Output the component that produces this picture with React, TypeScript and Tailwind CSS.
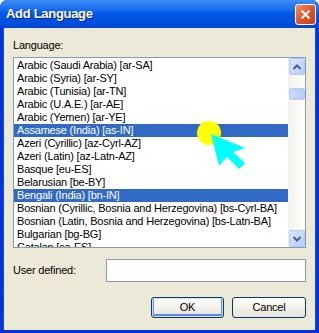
import React from "react";

const langs = [
  "Arabic (Saudi Arabia) [ar-SA]",
  "Arabic (Syria) [ar-SY]",
  "Arabic (Tunisia) [ar-TN]",
  "Arabic (U.A.E.) [ar-AE]",
  "Arabic (Yemen) [ar-YE]",
  "Assamese (India) [as-IN]",
  "Azeri (Cyrillic) [az-Cyrl-AZ]",
  "Azeri (Latin) [az-Latn-AZ]",
  "Basque [eu-ES]",
  "Belarusian [be-BY]",
  "Bengali (India) [bn-IN]",
  "Bosnian (Cyrillic, Bosnia and Herzegovina) [bs-Cyrl-BA]",
  "Bosnian (Latin, Bosnia and Herzegovina) [bs-Latn-BA]",
  "Bulgarian [bg-BG]",
  "Catalan [ca-ES]",
];

const selected = [5, 10];

function ScrollButton({ up }: { up?: boolean }) {
  return (
    <div className="flex h-[17px] w-[16px] items-center justify-center rounded-[2px] border border-[#b7c9f5] bg-gradient-to-br from-[#dbe6fd] to-[#b7cbf9]">
      <svg width="8" height="6" viewBox="0 0 8 6">
        <path
          d={up ? "M0.5 5 L4 1.5 L7.5 5" : "M0.5 1 L4 4.5 L7.5 1"}
          fill="none"
          stroke="#4d6185"
          strokeWidth="2"
        />
      </svg>
    </div>
  );
}

export default function App() {
  return (
    <div
      className="relative h-[333px] w-[319px] overflow-hidden rounded-t-[7px] bg-[#0831d9] text-[11px] tracking-[-0.2px] text-black"
      style={{ fontFamily: '"Liberation Sans", Arial, sans-serif' }}
    >
      <div className="flex h-full flex-col">
        {/* title bar */}
        <div className="flex h-[28px] shrink-0 items-center justify-between rounded-t-[7px] bg-gradient-to-b from-[#3d8ff8] via-[#0058e6] to-[#0047d6] pl-[6px] pr-[3px]">
          <span className="text-[13px] font-bold tracking-[-0.3px] text-white [text-shadow:1px_1px_0_#0a1e88]">
            Add Language
          </span>
          <div className="flex h-[21px] w-[21px] items-center justify-center rounded-[3px] border border-white bg-gradient-to-br from-[#f08b6a] via-[#e2542a] to-[#c6401a]">
            <svg width="11" height="11" viewBox="0 0 11 11">
              <path d="M1.5 1.5 L9.5 9.5 M9.5 1.5 L1.5 9.5" stroke="white" strokeWidth="2" />
            </svg>
          </div>
        </div>

        {/* body */}
        <div className="mx-[3px] mb-[3px] flex flex-1 flex-col border-x border-[#0054e3] bg-[#ece9d8] px-[9px]">
          <div className="mt-[11px] h-[13px] leading-[13px]">Language:</div>

          <div className="mt-[5px] flex h-[191px] border border-[#7f9db9] bg-white">
            <div className="flex-1 overflow-hidden pt-px">
              {langs.map((l, i) => (
                <div
                  key={l}
                  className={
                    "h-[13px] whitespace-nowrap pl-[3px] leading-[13px] " +
                    (selected.includes(i) ? "bg-[#316ac5] text-white" : "")
                  }
                >
                  {l}
                </div>
              ))}
            </div>
            <div className="flex w-[17px] flex-col items-center bg-gradient-to-r from-[#f3f1ec] to-[#fefefb]">
              <ScrollButton up />
              <div className="mt-[13px] h-[12px] w-[16px] rounded-[2px] border border-[#b7c9f5] bg-gradient-to-r from-[#c9d8fc] to-[#b9cdfa]" />
              <div className="flex-1" />
              <ScrollButton />
            </div>
          </div>

          <div className="mt-[11px] flex items-center">
            <span className="w-[93px] leading-[13px]">User defined:</span>
            <div className="h-[23px] flex-1 border border-[#7f9db9] bg-white" />
          </div>

          <div className="mt-[15px] flex justify-end gap-[8px]">
            <button className="h-[21px] w-[73px] rounded-[3px] border border-[#003c74] bg-gradient-to-b from-white to-[#e6e3d6] shadow-[inset_0_0_0_1px_#cee7ff,inset_0_-1px_0_2px_#6982ee]">
              OK
            </button>
            <button className="h-[21px] w-[74px] rounded-[3px] border border-[#003c74] bg-gradient-to-b from-white to-[#e6e3d6]">
              Cancel
            </button>
          </div>
        </div>
      </div>

      {/* cursor highlight */}
      <svg className="pointer-events-none absolute left-0 top-0" width="319" height="333">
        <circle cx="209" cy="133" r="12" fill="#ffff00" />
        <polygon
          points="211,134 245,148 233,152 245,163 239,169 227,157 219,166"
          fill="#00ffff"
        />
      </svg>
    </div>
  );
}
